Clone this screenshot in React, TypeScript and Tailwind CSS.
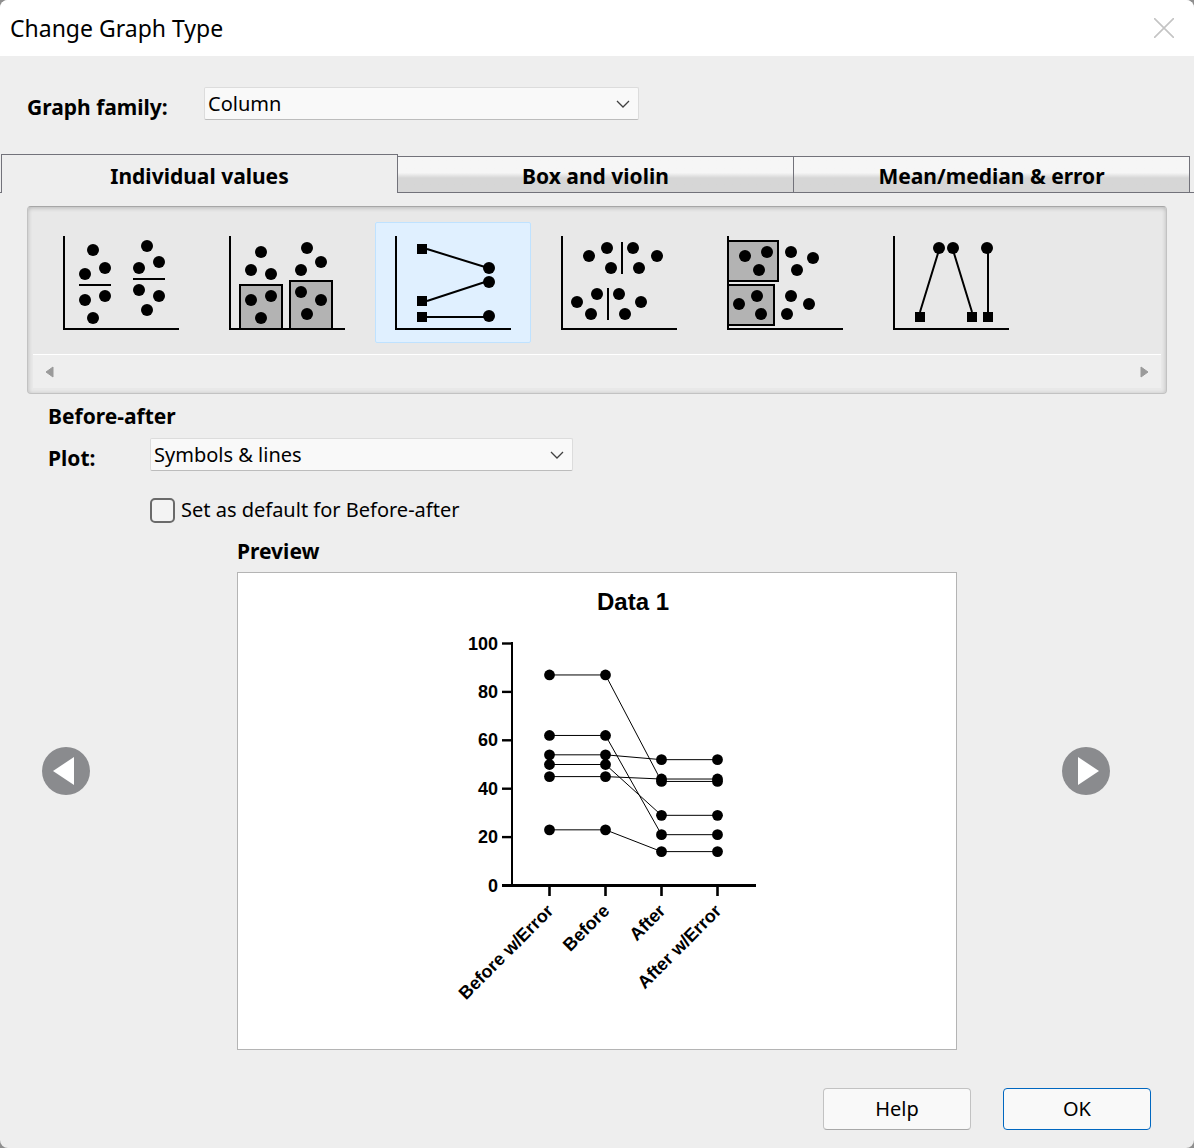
import React, { useState } from "react";
import clsx from "clsx";

const tabs = ["Individual values", "Box and violin", "Mean/median & error"];

type Point = [number, number];

type GraphType = {
  name: string;
  dots: Point[];
  squares?: Point[];
  lines?: string;
  boxes?: [number, number, number, number][];
};

const graphTypes: GraphType[] = [
  {
    name: "Scatter dot plot",
    dots: [[50, 28], [62, 46], [42, 52], [42, 78], [62, 74], [50, 96], [104, 24], [116, 40], [96, 46], [96, 68], [116, 74], [104, 88]],
    lines: "M36 63H68M90 57H122",
  },
  {
    name: "Scatter plot with bar",
    dots: [[52, 30], [42, 48], [62, 52], [42, 78], [62, 74], [52, 96], [98, 26], [112, 40], [92, 48], [92, 70], [112, 78], [98, 92]],
    boxes: [[31, 63, 42, 44], [81, 59, 42, 48]],
  },
  {
    name: "Before-after",
    dots: [[114, 46], [114, 60], [114, 94]],
    squares: [[42, 22], [42, 74], [42, 90]],
    lines: "M52 27L110 45M52 79L110 60M52 95H110",
  },
  {
    name: "Horizontal scatter dot plot",
    dots: [[48, 34], [66, 26], [70, 46], [92, 26], [116, 34], [98, 46], [36, 80], [56, 72], [50, 92], [78, 72], [100, 80], [84, 92]],
    lines: "M81 20V52M67 66V98",
  },
  {
    name: "Horizontal scatter plot with bar",
    dots: [[38, 34], [60, 30], [52, 48], [84, 30], [106, 36], [90, 48], [32, 82], [50, 74], [54, 92], [84, 74], [102, 82], [80, 92]],
    boxes: [[21, 19, 50, 40], [21, 63, 46, 40]],
  },
  {
    name: "Horizontal before-after",
    dots: [[66, 26], [80, 26], [114, 26]],
    squares: [[42, 90], [94, 90], [110, 90]],
    lines: "M66 28L47 90M80 28L99 90M115 28V90",
  },
];

const columns = ["Before w/Error", "Before", "After", "After w/Error"];

const subjects = [
  [87, 87, 43, 43],
  [62, 62, 21, 21],
  [54, 54, 52, 52],
  [50, 50, 29, 29],
  [45, 45, 44, 44],
  [23, 23, 14, 14],
];

const xPos = (i: number) => 311.5 + i * 56;
const yPos = (value: number) => 312.5 - value * 2.42;

const GraphTypeIcon = ({ type }: { type: GraphType }) => (
  <svg viewBox="0 0 156 121" className="w-[156px] h-[121px]" aria-hidden="true">
    {type.boxes?.map(([x, y, w, h]) => (
      <rect key={`${x}-${y}`} x={x} y={y} width={w} height={h} fill="#b3b3b3" stroke="#000" strokeWidth="2" />
    ))}
    <path d="M21 14V107H136" fill="none" stroke="#000" strokeWidth="2" />
    {type.lines && <path d={type.lines} fill="none" stroke="#000" strokeWidth="2" />}
    {type.squares?.map(([x, y]) => (
      <rect key={`${x}-${y}`} x={x} y={y} width="10" height="10" />
    ))}
    {type.dots.map(([x, y]) => (
      <circle key={`${x}-${y}`} cx={x} cy={y} r="6" />
    ))}
  </svg>
);

type SelectProps = {
  id: string;
  options: string[];
  className?: string;
};

const Select = ({ id, options, className }: SelectProps) => (
  <div className={clsx("relative", className)}>
    <select
      id={id}
      className="block w-full h-[33px] appearance-none rounded-xs border border-[#dcdcdc] border-b-[#bcbcbc] bg-[#f9f9f9] pl-[3px] pr-8 text-xl leading-8 outline-none"
    >
      {options.map((option) => (
        <option key={option}>{option}</option>
      ))}
    </select>
    <svg
      viewBox="0 0 14 8"
      className="pointer-events-none absolute right-[9px] top-[13px] w-[14px] h-2"
      aria-hidden="true"
    >
      <path d="M1 1L7 7L13 1" fill="none" stroke="#404040" strokeWidth="1.3" />
    </svg>
  </div>
);

const PreviewChart = () => (
  <svg
    viewBox="0 0 718 476"
    className="block w-full h-auto font-bold font-['Liberation_Sans',Arial,sans-serif]"
    role="img"
    aria-label="Data 1"
  >
    <text x="395" y="37" textAnchor="middle" fontSize="24">
      Data 1
    </text>

    {/* Axes */}
    <path d="M274 69V312" stroke="#000" strokeWidth="2" />
    <path d="M264 312.5H518" stroke="#000" strokeWidth="3" />
    {[0, 20, 40, 60, 80, 100].map((value) => (
      <g key={value}>
        <path d={`M264 ${yPos(value)}H274`} stroke="#000" strokeWidth="2.4" />
        <text x="260" y={yPos(value) + 6} textAnchor="end" fontSize="18">
          {value}
        </text>
      </g>
    ))}
    {columns.map((label, i) => (
      <g key={label}>
        <path d={`M${xPos(i)} 313V323`} stroke="#000" strokeWidth="2.6" />
        <text
          transform={`translate(${xPos(i) + 5} 339) rotate(-45)`}
          textAnchor="end"
          fontSize="18"
        >
          {label}
        </text>
      </g>
    ))}

    {/* Data */}
    {subjects.map((values) => (
      <g key={values.join("-")}>
        <polyline
          points={values.map((value, i) => `${xPos(i)},${yPos(value)}`).join(" ")}
          fill="none"
          stroke="#000"
          strokeWidth="1"
        />
        {values.map((value, i) => (
          <circle key={i} cx={xPos(i)} cy={yPos(value)} r="5.4" />
        ))}
      </g>
    ))}
  </svg>
);

const App = () => {
  const [activeTab, setActiveTab] = useState(0);
  const [selected, setSelected] = useState(2);

  return (
    <div className="bg-[#8f8f8f]">
      <div className="overflow-hidden rounded-lg bg-[#eeeeee] text-black font-['Noto_Sans',Tahoma,sans-serif]">
        {/* Title bar */}
        <header className="flex h-14 items-center justify-between bg-white pl-[10px] pr-5">
          <h1 className="text-[23px] leading-8">Change Graph Type</h1>
          <button type="button" aria-label="Close">
            <svg viewBox="0 0 20 20" className="block size-5" aria-hidden="true">
              <path d="M0 0L20 20M20 0L0 20" stroke="#c4c4c4" strokeWidth="1.6" />
            </svg>
          </button>
        </header>

        <div className="flex items-start pl-[27px] pt-[31px]">
          <label htmlFor="family" className="w-[177px] text-[21px] leading-8 font-bold pt-1">
            Graph family:
          </label>
          <Select id="family" options={["Column", "XY", "Grouped"]} className="w-[435px]" />
        </div>

        {/* Tabs */}
        <div className="mt-[31px] flex items-end" role="tablist">
          <div className="w-px self-stretch border-b border-[#72727a]" />
          {tabs.map((tab, i) => (
            <button
              key={tab}
              type="button"
              role="tab"
              aria-selected={activeTab === i}
              onClick={() => setActiveTab(i)}
              className={clsx(
                "flex-1 border-[#72727a] text-[21px] leading-7 font-bold",
                activeTab === i
                  ? "h-[39px] border-x border-t pt-1"
                  : "h-[37px] border-y border-r bg-linear-to-b from-[#f6f6f6] from-45% to-[#d6d6d6] to-60% pt-[3px]"
              )}
            >
              {tab}
            </button>
          ))}
          <div className="w-1 self-stretch border-b border-[#72727a]" />
        </div>

        {/* Graph type list */}
        <div className="mx-[27px] mt-[13px] rounded-sm border border-[#c2c2c2] border-t-[#a6a6a6] bg-[#e8e8e8] px-[5px] pb-[5px] shadow-[inset_0_1px_4px_rgba(0,0,0,0.22)]">
          <div className="flex gap-[10px] overflow-hidden pl-[10px] pt-[15px] pb-[11px]">
            {graphTypes.map((type, i) => (
              <button
                key={type.name}
                type="button"
                aria-label={type.name}
                aria-pressed={selected === i}
                onClick={() => setSelected(i)}
                className={clsx(
                  "shrink-0 rounded-xs",
                  selected === i && "bg-[#e0f0ff] outline -outline-offset-1 outline-[#bfe2ff]"
                )}
              >
                <GraphTypeIcon type={type} />
              </button>
            ))}
          </div>
          <div className="flex h-[34px] items-center justify-between border-t border-white bg-[#eeeeee] px-3">
            <button type="button" aria-label="Scroll left">
              <svg viewBox="0 0 9 12" className="block w-[9px] h-3" aria-hidden="true">
                <path d="M8 1V11L1 6Z" fill="#9a9a9a" stroke="#9a9a9a" strokeLinejoin="round" />
              </svg>
            </button>
            <button type="button" aria-label="Scroll right">
              <svg viewBox="0 0 9 12" className="block w-[9px] h-3" aria-hidden="true">
                <path d="M1 1V11L8 6Z" fill="#9a9a9a" stroke="#9a9a9a" strokeLinejoin="round" />
              </svg>
            </button>
          </div>
        </div>

        <div className="pl-12 pt-[6px]">
          <h2 className="text-[21px] leading-8 font-bold">{graphTypes[selected].name}</h2>
          <div className="mt-[6px] flex items-start">
            <label htmlFor="plot" className="w-[102px] text-[21px] leading-8 font-bold pt-1">
              Plot:
            </label>
            <Select id="plot" options={["Symbols & lines", "Lines only", "Symbols only"]} className="w-[423px]" />
          </div>
          <div className="mt-5 flex items-center pl-[102px]">
            <input
              id="default"
              type="checkbox"
              className="size-[25px] appearance-none rounded-[5px] border-2 border-[#6a6a6a] bg-[#f3f3f3] checked:bg-[#0067c0]"
            />
            <label htmlFor="default" className="pl-[6px] text-xl leading-8">
              Set as default for Before-after
            </label>
          </div>
        </div>

        {/* Preview */}
        <div className="mt-[9px] grid grid-cols-[237px_1fr_237px]">
          <h2 className="col-start-2 text-[21px] leading-8 font-bold">Preview</h2>
          <div className="col-start-1 flex items-center pl-[42px] pb-[75px]">
            <button type="button" aria-label="Previous">
              <svg viewBox="0 0 48 48" className="block size-12" aria-hidden="true">
                <circle cx="24" cy="24" r="24" fill="#8a8b8e" />
                <path d="M11 24L32 10V38Z" fill="#fff" />
              </svg>
            </button>
          </div>
          <div className="mt-[5px] border border-[#b4b4b4] bg-white">
            <PreviewChart />
          </div>
          <div className="flex items-center pl-[105px] pb-[75px]">
            <button type="button" aria-label="Next">
              <svg viewBox="0 0 48 48" className="block size-12" aria-hidden="true">
                <circle cx="24" cy="24" r="24" fill="#8a8b8e" />
                <path d="M37 24L16 10V38Z" fill="#fff" />
              </svg>
            </button>
          </div>
        </div>

        <footer className="flex justify-end gap-8 pt-[38px] pr-[43px] pb-[18px]">
          <button
            type="button"
            className="h-[42px] w-[148px] rounded-sm border border-[#c2c2c2] border-b-[#a8a8a8] bg-[#f9f9f9] text-xl"
          >
            Help
          </button>
          <button
            type="button"
            className="h-[42px] w-[148px] rounded-sm border border-[#0067c0] bg-[#f9f9f9] text-xl"
          >
            OK
          </button>
        </footer>
      </div>
    </div>
  );
};

export default App;
